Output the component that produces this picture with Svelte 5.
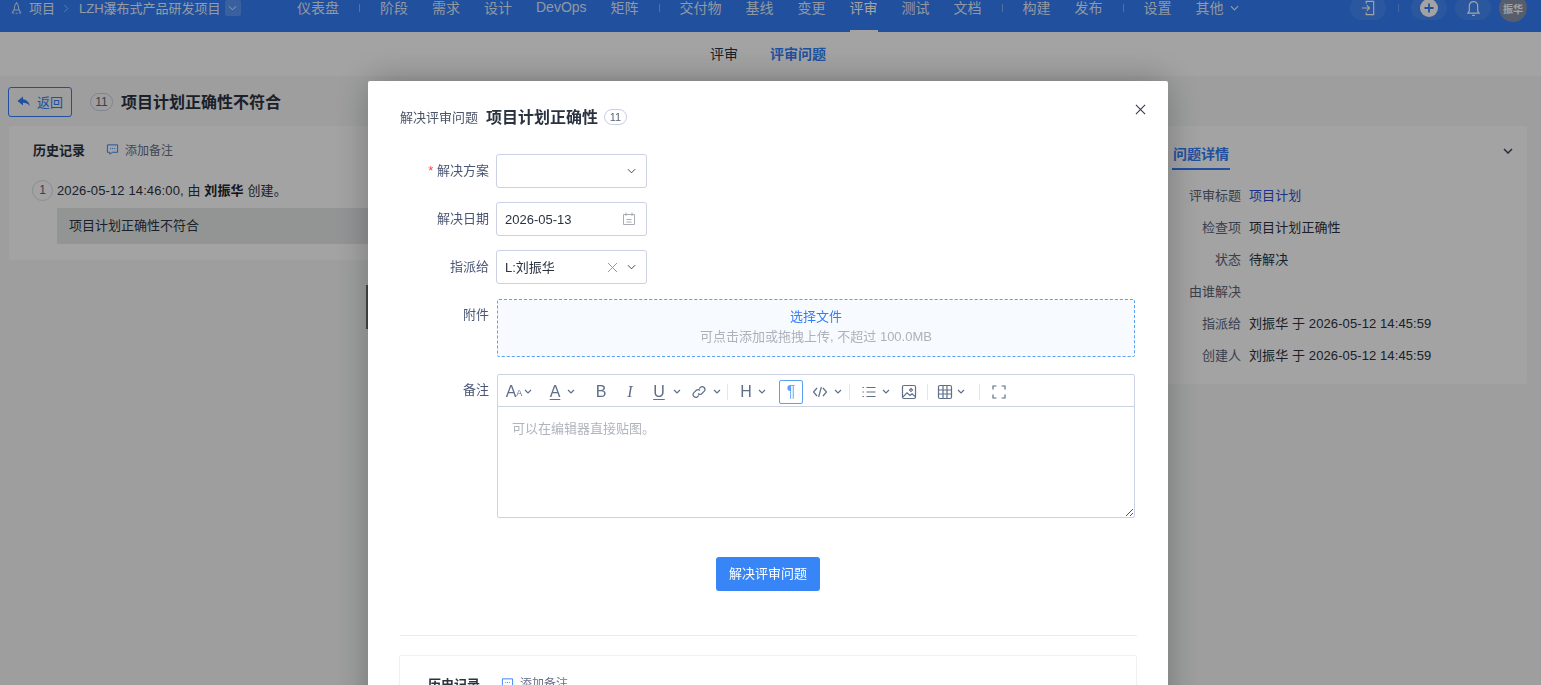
<script>
    // nav entries, "|" is a separator
    const navItems = ["仪表盘", "|", "阶段", "需求", "设计", "DevOps", "矩阵", "|", "交付物", "基线", "变更", "评审", "测试", "文档", "|", "构建", "发布", "|", "设置", "其他"];

    const details = [
        ["评审标题", "项目计划", true],
        ["检查项", "项目计划正确性", false],
        ["状态", "待解决", false],
        ["由谁解决", "", false],
        ["指派给", "刘振华 于 2026-05-12 14:45:59", false],
        ["创建人", "刘振华 于 2026-05-12 14:45:59", false]
    ];

    // ml = gap before the item
    const tools = [
        { k: "aa", ml: 8 }, { k: "caret", ml: 1 },
        { k: "a", ml: 14 }, { k: "caret", ml: 3 },
        { k: "b", ml: 17 },
        { k: "i", ml: 13 },
        { k: "u", ml: 13 }, { k: "caret", ml: 5 },
        { k: "link", ml: 9 }, { k: "caret", ml: 5 },
        { k: "sep", ml: 5 },
        { k: "h", ml: 10 }, { k: "caret", ml: 3 },
        { k: "para", ml: 12 },
        { k: "code", ml: 9 }, { k: "caret", ml: 5 },
        { k: "sep", ml: 6 },
        { k: "list", ml: 11 }, { k: "caret", ml: 4 },
        { k: "image", ml: 10 },
        { k: "sep", ml: 10 },
        { k: "table", ml: 9 }, { k: "caret", ml: 3 },
        { k: "sep", ml: 13 },
        { k: "full", ml: 11 }
    ];

    const toolPaths = {
        link: "M7 9.500a2.600 2.600 0 0 0 3.700.2l2.600-2.600a2.700 2.700 0 0 0-3.800-3.800L8.200 4.600M9 6.500a2.600 2.600 0 0 0-3.700-.2L2.700 8.900a2.700 2.700 0 0 0 3.800 3.800l1.300-1.300",
        code: "M5 4 1.500 8 5 12M11 4l3.500 4L11 12M9.400 3 6.600 13",
        list: "M5.500 3.500h9M5.500 8h9M5.500 12.500h9M1.500 3.500h1.400M1.500 8h1.400M1.500 12.500h1.400",
        image: "M3 1.500h10A1.500 1.500 0 0 1 14.500 3v10a1.500 1.500 0 0 1-1.500 1.500H3A1.500 1.500 0 0 1 1.500 13V3A1.500 1.500 0 0 1 3 1.500ZM2 12.800l4-4 3 2.700 2-1.700 3.200 2.800M10 4.500l1.500 1.500-1.500 1.500-1.500-1.500Z",
        table: "M3 1.500h10A1.500 1.500 0 0 1 14.500 3v10a1.500 1.500 0 0 1-1.500 1.500H3A1.500 1.500 0 0 1 1.500 13V3A1.500 1.500 0 0 1 3 1.500ZM1.500 6h13M1.500 10h13M6 1.500v13M10 1.500v13",
        full: "M2 5.500V2h3.500M10.500 2H14v3.500M14 10.500V14h-3.500M5.500 14H2v-3.500"
    };
</script>

<div class="page">
    <header class="topbar">
        <div class="crumbs">
            <svg class="rocket" viewBox="0 0 14 16" width="13" height="15" fill="none" stroke="currentColor" stroke-width="1.100">
                <path d="M7 1.500C5 4 4.500 6.500 4.500 9.500h5C9.500 6.500 9 4 7 1.500ZM4.500 9 2.500 12.500 4.500 13M9.500 9l2 3.500-2 .5M6 13h2"/>
            </svg>
            <span class="crumb">项目</span>
            <svg viewBox="0 0 8 10" width="7" height="9" fill="none" stroke="currentColor" class="crumb-arrow"><path d="M1.500 1 5.500 5 1.500 9"/></svg>
            <span class="crumb">LZH瀑布式产品研发项目</span>
            <span class="crumb-drop">
                <svg viewBox="0 0 10 6" width="9" height="6" fill="none" stroke="currentColor"><path d="M1 1l4 4 4-4"/></svg>
            </span>
        </div>
        <nav class="mainnav">
            {#each navItems as item}
                {#if item === "|"}
                    <i class="nav-sep"></i>
                {:else}
                    <span class="nav-item" class:active={item === "评审"}>
                        <span class="nav-text">{item}</span>
                        {#if item === "其他"}
                            <svg viewBox="0 0 10 6" width="9" height="6" fill="none" stroke="currentColor" stroke-width="1.300"><path d="M1 1l4 4 4-4"/></svg>
                        {/if}
                    </span>
                {/if}
            {/each}
        </nav>
        <div class="actions">
            <span class="pill">
                <svg viewBox="0 0 16 18" width="14" height="16" fill="none" stroke="currentColor" stroke-width="1.300"><path d="M6 4V1.500h8.500v15H6V14M1 9h8.500M6.500 5.800 9.700 9l-3.200 3.200"/></svg>
            </span>
            <i class="action-sep"></i>
            <span class="pill">
                <svg viewBox="0 0 18 18" width="18" height="18"><circle cx="9" cy="9" r="9" fill="currentColor"/><path d="M9 4.500v9M4.500 9h9" stroke="#327ef8" stroke-width="1.800"/></svg>
            </span>
            <span class="pill bell">
                <svg viewBox="0 0 14 18" width="13" height="17" fill="none" stroke="currentColor" stroke-width="1.300"><path d="M7 1.500a4.500 4.500 0 0 0-4.500 4.500v5.500L1 14h12l-1.500-2.500V6A4.500 4.500 0 0 0 7 1.500ZM5.500 16.500h3"/></svg>
                <b class="badge"></b>
            </span>
            <span class="avatar">振华</span>
        </div>
    </header>

    <div class="subnav">
        <span>评审</span>
        <span class="sub-active">评审问题</span>
    </div>

    <div class="head">
        <button class="back">
            <svg viewBox="0 0 14 12" width="14" height="12" fill="currentColor"><path d="M6 .5 .5 5 6 9.500V6.700c3 0 5 .8 6.800 3.300C12.300 6.500 10 3.800 6 3.300Z"/></svg>
            <span>返回</span>
        </button>
        <span class="num">11</span>
        <h1>项目计划正确性不符合</h1>
    </div>

    <div class="columns">
        <section class="card history">
            <div class="hist-head">
                <strong>历史记录</strong>
                <svg class="note-icon" viewBox="0 0 14 14" width="13" height="13" fill="none" stroke="#327ef8"><path d="M1.500 2h11v8H7l-3 2v-2H1.500Z"/><path d="M4.500 6h5" stroke-dasharray="1 1"/></svg>
                <span class="add-note">添加备注</span>
            </div>
            <div class="hist-row">
                <span class="step">1</span>
                <span class="hist-text">2026-05-12 14:46:00, 由 <b>刘振华</b> 创建。</span>
            </div>
            <div class="hist-body">项目计划正确性不符合</div>
        </section>
        <aside class="card detail">
            <div class="detail-tab">
                <span>问题详情</span>
                <svg viewBox="0 0 10 6" width="10" height="6" fill="none" stroke="#3e4658" stroke-width="1.500"><path d="M1 1l4 4 4-4"/></svg>
            </div>
            <dl>
                {#each details as [label, value, link]}
                    <div class="detail-row">
                        <dt>{label}</dt>
                        <dd class:link>{value}</dd>
                    </div>
                {/each}
            </dl>
        </aside>
    </div>
</div>

<div class="overlay"></div>

<div class="modal">
    <i class="resizer"></i>
    <button class="close" aria-label="关闭">
        <svg viewBox="0 0 12 12" width="11" height="11" fill="none" stroke="#2b3448" stroke-width="1.100"><path d="M1 1l10 10M11 1 1 11"/></svg>
    </button>
    <div class="modal-title">
        <span class="mt-label">解决评审问题</span>
        <strong>项目计划正确性</strong>
        <span class="num small">11</span>
    </div>

    <div class="form">
        <label class="lbl"><em>*</em> 解决方案</label>
        <div class="input">
            <span></span>
            <svg class="chev" viewBox="0 0 10 6" width="9" height="6" fill="none" stroke="#3e4658" stroke-width="1.100"><path d="M1 1l4 4 4-4"/></svg>
        </div>
        <label class="lbl">解决日期</label>
        <div class="input">
            <span>2026-05-13</span>
            <svg class="cal" viewBox="0 0 14 14" width="14" height="14" fill="none" stroke="#a9acb4"><path d="M1.500 2.500h11v10h-11ZM4 .5v3.500M10 .5v3.500M4.500 7.500h5M4.500 10h5"/></svg>
        </div>
        <label class="lbl">指派给</label>
        <div class="input">
            <span class="cjk">L:刘振华</span>
            <svg class="clear" viewBox="0 0 12 12" width="11" height="11" fill="none" stroke="#8d919b"><path d="M1 1l10 10M11 1 1 11"/></svg>
            <svg class="chev" viewBox="0 0 10 6" width="9" height="6" fill="none" stroke="#3e4658" stroke-width="1.100"><path d="M1 1l4 4 4-4"/></svg>
        </div>
    </div>

    <div class="wide-row upload-row">
        <label class="lbl">附件</label>
        <div class="upload">
            <span class="pick">选择文件</span>
            <span class="hint">可点击添加或拖拽上传, 不超过 100.0MB</span>
        </div>
    </div>

    <div class="wide-row editor-row">
        <label class="lbl">备注</label>
        <div class="editor">
            <div class="toolbar">
                {#each tools as t}
                    {#if t.k === "caret"}
                        <svg class="tcaret" style="margin-left: {t.ml}px" viewBox="0 0 10 6" width="10" height="6" fill="none" stroke="#5f6f8a" stroke-width="1.200"><path d="M2 1l3 3 3-3"/></svg>
                    {:else if t.k === "sep"}
                        <i class="tsep" style="margin-left: {t.ml}px"></i>
                    {:else if t.k === "para"}
                        <span class="tool para" style="margin-left: {t.ml}px">¶</span>
                    {:else if toolPaths[t.k]}
                        <svg class="ticon" style="margin-left: {t.ml}px" viewBox="0 0 16 16" width="16" height="16" fill="none" stroke="#5f6f8a" stroke-width="1.200"><path d={toolPaths[t.k]}/></svg>
                    {:else}
                        <span class="tool {t.k}" style="margin-left: {t.ml}px">
                            {#if t.k === "aa"}A<small>A</small>{:else}{t.k.toUpperCase()}{/if}
                        </span>
                    {/if}
                {/each}
            </div>
            <div class="edit-area">
                <span>可以在编辑器直接贴图。</span>
                <svg class="grip" viewBox="0 0 10 10" width="10" height="10" fill="none" stroke="#555"><path d="M9 2 2 9M9 6 6 9"/></svg>
            </div>
        </div>
    </div>

    <div class="submit-row">
        <button class="submit">解决评审问题</button>
    </div>

    <hr />

    <div class="inner-history">
        <strong>历史记录</strong>
        <svg class="note-icon" viewBox="0 0 14 14" width="13" height="13" fill="none" stroke="#327ef8"><path d="M1.500 2h11v8H7l-3 2v-2H1.500Z"/><path d="M4.500 6h5" stroke-dasharray="1 1"/></svg>
        <span class="add-note">添加备注</span>
    </div>
</div>

<style>
    :global(body) {
        margin: 0;
        overflow: hidden;
        background: #f7f8f8;
        font-family: "Liberation Sans", "Noto Sans CJK SC", sans-serif;
        font-size: 13px;
        color: #2b3240;
    }

    .page {
        margin-top: -16px;
        height: 701px;
        overflow: hidden;
    }

    /* top bar */
    .topbar {
        height: 48px;
        background: #327ef8;
        color: #fff;
        display: flex;
        align-items: center;
        font-size: 14px;
    }

    .crumbs {
        width: 285px;
        flex: none;
        display: flex;
        align-items: center;
        box-sizing: border-box;
        padding-left: 10px;
        font-size: 13px;
    }

    .rocket {
        margin-right: 6px;
        opacity: .8;
    }

    .crumb {
        opacity: .9;
        padding-bottom: 2px;
    }

    .crumb-arrow {
        margin: 0 9px 0 8px;
        opacity: .6;
    }

    .crumb-drop {
        margin-left: 4px;
        width: 16px;
        height: 16px;
        border-radius: 2px;
        background: rgba(255, 255, 255, .2);
        display: flex;
        align-items: center;
        justify-content: center;
    }

    .mainnav {
        display: flex;
        align-items: center;
        height: 100%;
    }

    .nav-item {
        position: relative;
        margin: 0 12px;
        height: 100%;
        display: flex;
        align-items: center;
        gap: 6px;
        white-space: nowrap;
        color: rgba(255, 255, 255, .88);
    }

    .nav-text {
        padding-bottom: 2px;
    }

    .nav-item.active {
        color: #fff;
    }

    .nav-item.active::after {
        content: "";
        position: absolute;
        left: 0;
        right: 0;
        bottom: 0;
        height: 2px;
        background: #fff;
    }

    .nav-sep {
        width: 1px;
        height: 8px;
        margin: 0 8px;
        background: rgba(255, 255, 255, .4);
    }

    .actions {
        margin-left: auto;
        padding-right: 14px;
        display: flex;
        align-items: center;
    }

    .pill {
        position: relative;
        width: 36px;
        height: 24px;
        border-radius: 12px;
        background: rgba(255, 255, 255, .09);
        display: flex;
        align-items: center;
        justify-content: center;
        color: #fff;
    }

    .pill + .pill {
        margin-left: 8px;
    }

    .action-sep {
        width: 1px;
        height: 8px;
        margin: 0 12px;
        background: rgba(255, 255, 255, .3);
    }

    .badge {
        position: absolute;
        top: -6px;
        left: 28px;
        width: 14px;
        height: 8px;
        border-radius: 3px;
        background: #f04a4a;
    }

    .avatar {
        width: 28px;
        height: 28px;
        margin-left: 8px;
        border-radius: 50%;
        background: #8794ad;
        color: #fff;
        font-size: 10px;
        font-weight: 700;
        display: flex;
        align-items: center;
        justify-content: center;
    }

    /* sub nav */
    .subnav {
        height: 44px;
        background: #fff;
        box-sizing: border-box;
        padding: 0 5px 3px 0;
        display: flex;
        align-items: center;
        justify-content: center;
        gap: 32px;
        font-size: 14px;
        color: #2b3240;
    }

    .sub-active {
        color: #327ef8;
        font-weight: 700;
    }

    /* page head */
    .head {
        display: flex;
        align-items: center;
        padding: 11px 0 9px 8px;
        height: 30px;
    }

    .back {
        width: 64px;
        height: 30px;
        box-sizing: border-box;
        padding: 0;
        border: 1px solid #327ef8;
        border-radius: 3px;
        background: transparent;
        color: #327ef8;
        font: inherit;
        display: flex;
        align-items: center;
        justify-content: center;
        gap: 6px;
    }

    .back span {
        padding-bottom: 2px;
    }

    .num {
        margin-left: 18px;
        width: 23px;
        height: 18px;
        border: 1px solid #c9cfe3;
        box-sizing: border-box;
        border-radius: 9px;
        font-size: 12px;
        display: inline-flex;
        align-items: center;
        justify-content: center;
        color: #5c6478;
    }

    .head h1 {
        margin: 2px 0 0 8px;
        font-size: 16px;
        line-height: 30px;
        font-weight: 700;
        color: #2b3240;
    }

    /* columns behind the dialog */
    .columns {
        display: flex;
        align-items: flex-start;
        padding: 0 14px 0 9px;
    }

    .card {
        background: #fff;
        border-radius: 2px;
    }

    .history {
        flex: 1;
        height: 134px;
        box-sizing: border-box;
        padding: 14px 0 0 24px;
    }

    .hist-head {
        display: flex;
        align-items: center;
        height: 18px;
    }

    .hist-head strong, .inner-history strong {
        font-size: 13px;
        color: #2b3240;
    }

    .note-icon {
        margin-left: 21px;
    }

    .add-note {
        margin-left: 6px;
        font-size: 12px;
        color: #66708a;
    }

    .hist-row {
        margin: 21px 0 0 -1px;
        display: flex;
        align-items: center;
        height: 22px;
        gap: 4px;
        white-space: nowrap;
    }

    .hist-text {
        padding-bottom: 2px;
        letter-spacing: .12px;
    }

    .hist-row b {
        color: #1e2533;
    }

    .step {
        width: 21px;
        height: 21px;
        box-sizing: border-box;
        border: 1px solid #d8dce6;
        border-radius: 50%;
        font-size: 12px;
        color: #5c6478;
        display: flex;
        align-items: center;
        justify-content: center;
    }

    .hist-body {
        margin: 7px 0 0 24px;
        height: 36px;
        line-height: 35px;
        padding-left: 12px;
        background: #e6e9ea;
    }

    .detail {
        width: 370px;
        height: 258px;
        margin-left: 10px;
        box-sizing: border-box;
        padding: 16px 14px 0 15px;
    }

    .detail-tab {
        display: flex;
        justify-content: space-between;
        align-items: flex-start;
    }

    .detail-tab span {
        display: block;
        width: 58px;
        height: 28px;
        line-height: 24px;
        text-align: center;
        box-sizing: border-box;
        border-bottom: 2px solid #327ef8;
        font-size: 14px;
        font-weight: 700;
        color: #327ef8;
    }

    .detail-tab svg {
        margin-top: 6px;
    }

    .detail dl {
        margin: 9px 0 0 0;
    }

    .detail-row {
        display: flex;
        height: 32px;
        box-sizing: border-box;
        padding-bottom: 2px;
        align-items: center;
    }

    .detail dt {
        width: 69px;
        text-align: right;
        color: #5c6478;
    }

    .detail dd {
        margin: 0 0 0 8px;
        color: #2b3240;
        letter-spacing: .1px;
    }

    .detail dd.link {
        color: #2b50d8;
    }

    /* dialog */
    .overlay {
        position: fixed;
        inset: 0;
        background: rgba(0, 0, 0, .36);
    }

    .modal {
        position: fixed;
        left: 368px;
        top: 81px;
        width: 800px;
        height: 760px;
        box-sizing: border-box;
        padding: 24px 32px 0;
        background: #fff;
        border-radius: 2px;
        box-shadow: 0 0 36px rgba(0, 0, 0, .28);
    }

    .resizer {
        position: absolute;
        left: -2px;
        top: 204px;
        width: 2px;
        height: 44px;
        background: #3a3c3e;
    }

    .close {
        position: absolute;
        top: 23px;
        right: 22px;
        padding: 0;
        border: 0;
        background: none;
        display: flex;
    }

    .modal-title {
        display: flex;
        align-items: center;
        height: 24px;
    }

    .mt-label {
        color: #4b5468;
        padding-bottom: 2px;
    }

    .modal-title strong {
        margin-left: 8px;
        font-size: 16px;
        padding-bottom: 2px;
        color: #2b3240;
    }

    .num.small {
        margin-left: 6px;
        height: 16px;
        font-size: 11px;
    }

    .form {
        margin-top: 25px;
        display: grid;
        grid-template-columns: 89px 151px;
        column-gap: 7px;
        row-gap: 14px;
        align-items: center;
    }

    .lbl {
        text-align: right;
        color: #4b5675;
    }

    .form .lbl {
        padding-bottom: 4px;
    }

    .lbl em {
        color: #f04a4a;
        font-style: normal;
    }

    .input {
        height: 34px;
        box-sizing: border-box;
        border: 1px solid #ccd1e4;
        border-radius: 3px;
        padding: 0 10px 0 8px;
        display: flex;
        align-items: center;
        color: #2b3240;
    }

    .input span {
        flex: 1;
    }

    .input span.cjk {
        padding-bottom: 2px;
    }

    .clear {
        margin-right: 9px;
    }

    .wide-row {
        display: grid;
        grid-template-columns: 89px 638px;
        column-gap: 8px;
        margin-right: -2px;
    }

    .upload-row {
        margin-top: 15px;
    }

    .upload-row .lbl {
        padding-top: 5px;
    }

    .upload {
        height: 58px;
        box-sizing: border-box;
        border: 1px dashed #5aa0f7;
        border-radius: 2px;
        background: #f7fbff;
        display: flex;
        flex-direction: column;
        align-items: center;
        justify-content: flex-start;
        padding-top: 6px;
        gap: 1px;
    }

    .pick {
        color: #327ef8;
    }

    .hint {
        color: #adb1ba;
    }

    .editor-row {
        margin-top: 17px;
    }

    .editor-row .lbl {
        padding-top: 5px;
    }

    .editor {
        height: 144px;
        box-sizing: border-box;
        border: 1px solid #ccd1e4;
        border-radius: 2px;
        display: flex;
        flex-direction: column;
    }

    .toolbar {
        height: 32px;
        flex: none;
        box-sizing: border-box;
        padding-top: 2px;
        border-bottom: 1px solid #ccd1e4;
        display: flex;
        align-items: center;
    }

    .tool {
        width: 16px;
        height: 16px;
        display: flex;
        align-items: center;
        justify-content: center;
        color: #5f6f8a;
        font-size: 16px;
        line-height: 16px;
    }

    .tool small {
        font-size: 9px;
        margin-top: 3px;
    }

    .tool.a, .tool.u {
        text-decoration: underline;
        text-underline-offset: 2px;
    }

    .tool.i {
        font-style: italic;
        font-family: "Liberation Serif", serif;
    }

    .tool.para {
        width: 24px;
        height: 24px;
        box-sizing: border-box;
        border: 1px solid #5aa0f7;
        border-radius: 2px;
        color: #5aa0f7;
    }

    .tcaret {
        flex: none;
    }

    .ticon {
        flex: none;
    }

    .tsep {
        width: 1px;
        height: 16px;
        background: #e4e6ec;
        flex: none;
    }

    .edit-area {
        flex: 1;
        position: relative;
        padding: 11px 14px;
        color: #b0b4bd;
    }

    .grip {
        position: absolute;
        right: 0;
        bottom: 0;
    }

    .submit-row {
        margin-top: 39px;
        display: flex;
        justify-content: center;
    }

    .submit {
        width: 104px;
        height: 34px;
        padding: 0 0 4px;
        border: 0;
        border-radius: 3px;
        background: #3785f7;
        color: #fff;
        font: inherit;
    }

    hr {
        margin: 44px -1px 0 0;
        border: 0;
        border-top: 1px solid #e9ebef;
    }

    .inner-history {
        margin: 19px -1px 0 -1px;
        height: 60px;
        box-sizing: border-box;
        border: 1px solid #f0f1f4;
        border-radius: 2px;
        padding: 18px 0 0 28px;
        display: flex;
        align-items: flex-start;
    }

    .inner-history .note-icon {
        margin-top: 3px;
    }
</style>
